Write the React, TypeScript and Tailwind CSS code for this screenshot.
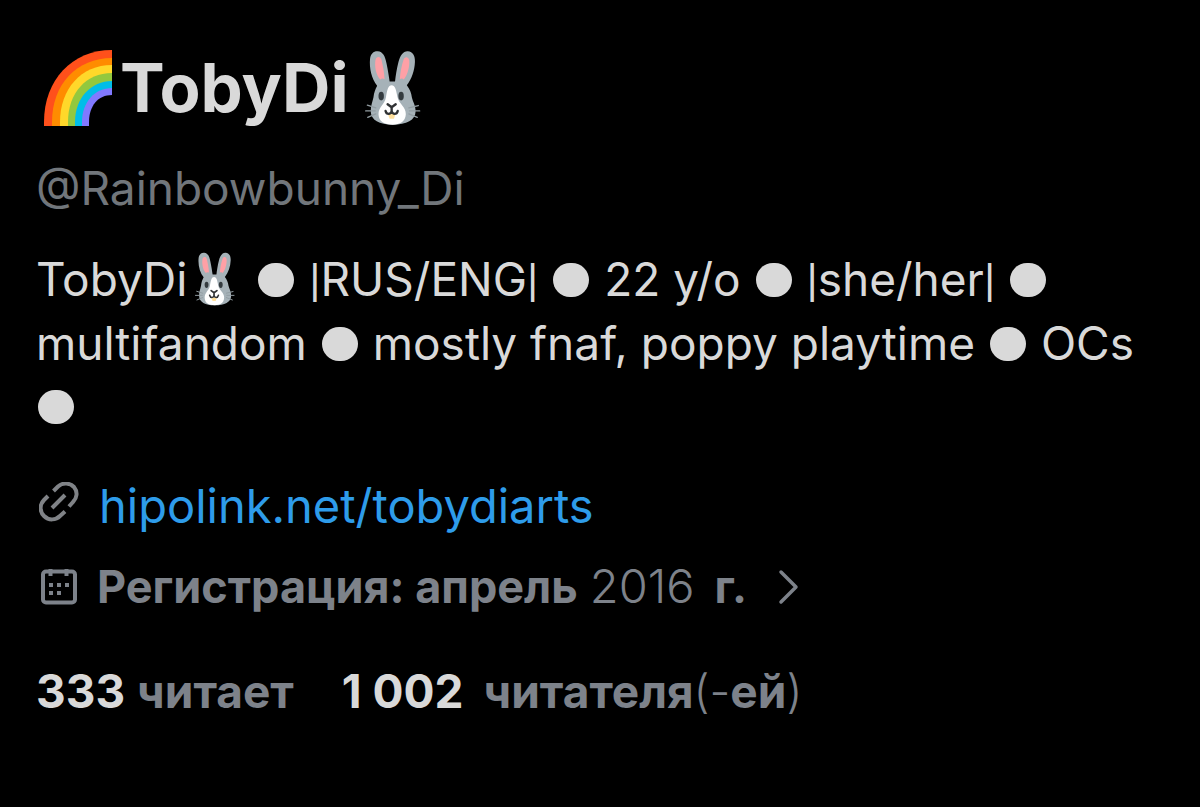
import React from "react";

function Rabbit({ className }: { className: string }) {
  return (
    <svg viewBox="48 32 166 224" className={className} role="img" aria-label="rabbit">
      <path
        d="M84 137C68 117 60 85 63 57C65 42 74 34 86 35C101 36 108 50 112 72C116 91 119 110 121 125H137C139 108 142 88 147 68C152 47 162 34 175 35C190 36 197 49 196 67C195 92 187 116 172 136C181 148 185 158 187 172C190 185 198 195 198 213C198 239 171 253 130 253C91 253 65 239 65 213C65 196 70 186 73 172C75 157 78 148 84 137Z"
        fill="#a6b2b8"
      />
      <path d="M93 119C80 105 76 78 79 61C81 51 93 48 97 61C101 78 105 97 106 118C101 115 97 116 93 119ZM163 119C175 105 181 78 179 62C177 50 165 50 162 61C156 79 153 97 151 118C156 115 160 116 163 119Z" fill="#ffa0a6" />
      <path d="M127 136C137 136 140 148 144 170C149 193 169 198 169 222C168 244 151 253 130 253C105 253 89 244 88 222C88 199 106 193 110 172C114 148 117 136 127 136Z" fill="#fff" />
      <ellipse cx="96" cy="168" rx="8" ry="13" fill="#343b3f" />
      <ellipse cx="155" cy="168" rx="8" ry="13" fill="#343b3f" />
      <path d="M116 221H138L134 235H121Z" fill="#ffe09c" />
      <path d="M115 192L127 201L139 192M127 201V213M109 212C112 224 124 223 127 213C130 223 142 224 145 212" fill="none" stroke="#303234" strokeWidth="7" strokeLinecap="round" strokeLinejoin="round" />
      <path d="M80 203L55 195M78 212H50M80 221L56 231M178 203L206 196M180 212H210M178 221L203 231" fill="none" stroke="#929da2" strokeWidth="4" strokeLinecap="round" />
    </svg>
  );
}

function Rainbow() {
  return (
    <svg viewBox="0 0 68 76" className="h-[76px] w-[68px] shrink-0" role="img" aria-label="rainbow">
      <path d="M0 76V72C0 30 28 0 68 0V76Z" fill="#ff501b" />
      <path d="M8 76V72C8 34 33 8 68 8V76Z" fill="#ff8c00" />
      <path d="M16 76V72C16 39 37 15 68 15V76Z" fill="#ffd82a" />
      <path d="M24 76V72C24 43 42 23 68 23V76Z" fill="#93c83e" />
      <path d="M31 76V72C31 48 47 31 68 31V76Z" fill="#00bde8" />
      <path d="M38 76V72C38 52 51 38 68 38V76Z" fill="#8179ff" />
      <path d="M45 76V72C45 56 54 45 68 45V76Z" fill="#000" />
    </svg>
  );
}

function Dot() {
  return <span aria-hidden="true" className="mx-[2px] inline-block h-[34px] w-9 rounded-full bg-[#d9d9d9] align-[-1px]" />;
}

function Bar() {
  return <span className="font-['Roboto']">|</span>;
}

export default function App() {
  return (
    <main className="min-h-screen bg-black px-9 pt-11 pb-20 font-['Inter','Noto_Sans',sans-serif] text-[46px] text-[#d9d9d9]">
      <h1 className="flex h-[88px] items-center pl-2 text-[67px] leading-[88px] font-bold">
        <Rainbow />
        <span className="ml-2">TobyDi</span>
        <Rabbit className="ml-4 h-[76px] w-14 shrink-0" />
      </h1>
      <p className="mt-6 leading-[64px] text-[#71767b]">@Rainbowbunny_Di</p>
      <p className="mt-7 leading-[63px]">
        TobyDi
        <Rabbit className="mr-2 ml-2 inline-block h-[54px] w-10 align-[-10px]" /> <Dot /> <Bar />RUS/ENG<Bar /> <Dot /> 22 y/o <Dot /> <Bar />she/her<Bar /> <Dot /> multifandom <Dot /> mostly fnaf, poppy playtime <Dot /> OCs <Dot />
      </p>
      <div className="mt-9 flex items-center gap-5 pl-[3px] text-[47px] leading-[64px]">
        <svg viewBox="0 0 40 40" className="mb-2 size-10 shrink-0" fill="none" stroke="#808387" strokeWidth="4" aria-hidden="true">
          <path d="M14.500 9L19 4.500C24 0 31 1 35 5C39 10 38 16 34 20L30 24.500M9 14L5 18C0 23 1 30 5 34C10 39 17 38 21 34L26 29.500M13 26L26 13" />
        </svg>
        <a href="https://hipolink.net/tobydiarts" className="text-[#2e9cea]">hipolink.net/tobydiarts</a>
      </div>
      <button type="button" className="mt-4 flex items-center gap-[18px] pl-[3px] text-[45px] leading-[64px] text-[#7d828a]">
        <svg viewBox="0 0 40 40" className="size-10 shrink-0" fill="none" stroke="currentColor" strokeWidth="4" aria-hidden="true">
          <rect x="4" y="4.500" width="32" height="31" rx="3" />
          <path d="M11.500 2V9M27.500 2V9" strokeWidth="4" />
          <path d="M10 18H14M18 18H22M26 18H30M10 26H14M18 26H22" strokeWidth="4" />
        </svg>
        <span className="flex items-baseline whitespace-pre"><b>Регистрация: апрель</b><span className="mr-5 ml-3 text-[47px] font-light">2016</span><b>г.</b></span>
        <svg viewBox="0 0 24 40" className="ml-3 h-10 w-6" fill="none" stroke="currentColor" strokeWidth="3.500" strokeLinecap="round" strokeLinejoin="round" aria-hidden="true">
          <path d="M4 5L19 20L4 35" />
        </svg>
      </button>
      <div className="mt-10 flex gap-12 leading-[64px] font-bold">
        <a href="#following" className="flex gap-3"><span>333</span><span className="text-[#7d828a]">читает</span></a>
        <a href="#followers" className="flex gap-5"><span>1 002</span><span className="text-[#7d828a]">читателя<span className="font-light">(-</span>ей<span className="font-light">)</span></span></a>
      </div>
    </main>
  );
}
